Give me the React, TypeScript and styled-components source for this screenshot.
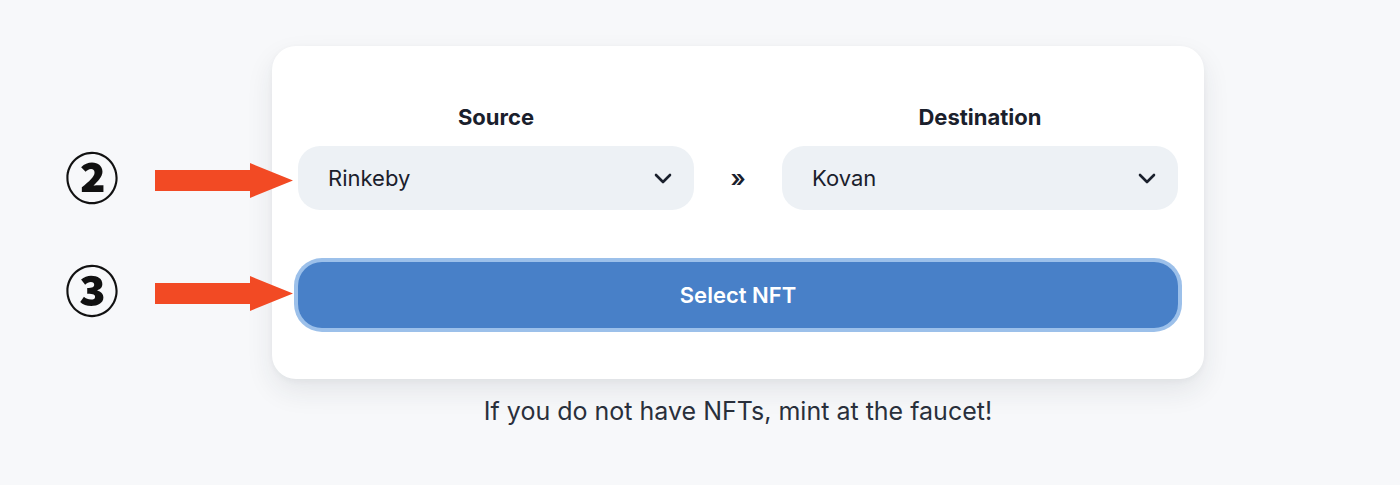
import styled, { createGlobalStyle } from 'styled-components'

const GlobalStyle = createGlobalStyle`
    html, body {
        margin: 0;
        padding: 0;
        background: #f7f8fa;
        font-family: Inter, "Noto Sans", sans-serif;
        color: #1a202c;
    }
`

type Network = {
    label: string;
    value: string;
}

function Chevron() {
    return (
        <svg width="18" height="11" viewBox="0 0 18 11" fill="none">
            <polyline points="2,2 9,9 16,2" stroke="#1a202c" strokeWidth="2.6" strokeLinecap="round" strokeLinejoin="round" />
        </svg>
    )
}

function Arrow() {
    return (
        <svg width="138" height="35" viewBox="0 0 138 35">
            <polygon points="0,7 95,7 95,0 138,17.5 95,35 95,28 0,28" fill="#f24a24" />
        </svg>
    )
}

function NetworkSelect(props: Network) {
    return (
        <Field>
            <Label>{props.label}</Label>
            <Select>
                <span>{props.value}</span>
                <Chevron />
            </Select>
        </Field>
    )
}

export default function App() {
    return (
        <Page>
            <GlobalStyle />
            <Stage>
                <Marker top={146}>②</Marker>
                <ArrowWrap top={163}><Arrow /></ArrowWrap>
                <Marker top={259}>③</Marker>
                <ArrowWrap top={276}><Arrow /></ArrowWrap>
                <Card>
                    <Row>
                        <NetworkSelect label="Source" value="Rinkeby" />
                        <Separator>»</Separator>
                        <NetworkSelect label="Destination" value="Kovan" />
                    </Row>
                    <PrimaryButton>Select NFT</PrimaryButton>
                </Card>
            </Stage>
            <Hint>If you do not have NFTs, mint at the faucet!</Hint>
        </Page>
    )
}

const Page = styled.div`
    min-height: 485px;
    box-sizing: border-box;
    padding: 46px 0 0 76px;
    display: flex;
    flex-direction: column;
    align-items: center;
`

const Stage = styled.div`
    position: relative;
`

const Marker = styled.div<{ top: number }>`
    position: absolute;
    left: -210px;
    top: ${p => p.top - 46}px;
    width: 60px;
    text-align: center;
    font-family: "Noto Sans CJK JP", sans-serif;
    font-weight: 900;
    font-size: 54px;
    line-height: 60px;
    color: #111;
`

const ArrowWrap = styled.div<{ top: number }>`
    position: absolute;
    left: -117px;
    top: ${p => p.top - 46}px;
    z-index: 2;
    line-height: 0;
`

const Card = styled.div`
    width: 932px;
    box-sizing: border-box;
    padding: 58px 26px 51px;
    background: #fff;
    border-radius: 24px;
    box-shadow: 0 12px 28px rgba(30, 40, 60, 0.09), 0 2px 6px rgba(30, 40, 60, 0.04);
`

const Row = styled.div`
    display: flex;
    align-items: flex-end;
    margin-bottom: 52px;
`

const Field = styled.div`
    width: 396px;
    display: flex;
    flex-direction: column;
    align-items: center;
`

const Label = styled.div`
    font-size: 22px;
    font-weight: 700;
    line-height: 26px;
    margin-bottom: 16px;
    color: #1a202c;
`

const Select = styled.div`
    width: 100%;
    height: 64px;
    box-sizing: border-box;
    padding: 0 22px 0 30px;
    display: flex;
    align-items: center;
    justify-content: space-between;
    background: #edf1f5;
    border-radius: 22px;
    font-size: 22px;
    color: #1a202c;
`

const Separator = styled.div`
    flex: 1;
    height: 64px;
    display: flex;
    align-items: center;
    justify-content: center;
    font-size: 24px;
    font-weight: 600;
    color: #1a202c;
`

const PrimaryButton = styled.button`
    display: block;
    width: 100%;
    height: 66px;
    border: none;
    border-radius: 24px;
    background: #4880c8;
    box-shadow: 0 0 0 4px #9cc0ea;
    color: #fff;
    font-family: Inter, sans-serif;
    font-size: 22px;
    font-weight: 600;
    cursor: pointer;
`

const Hint = styled.div`
    margin-top: 17px;
    font-size: 25px;
    line-height: 30px;
    color: #2a303c;
`
